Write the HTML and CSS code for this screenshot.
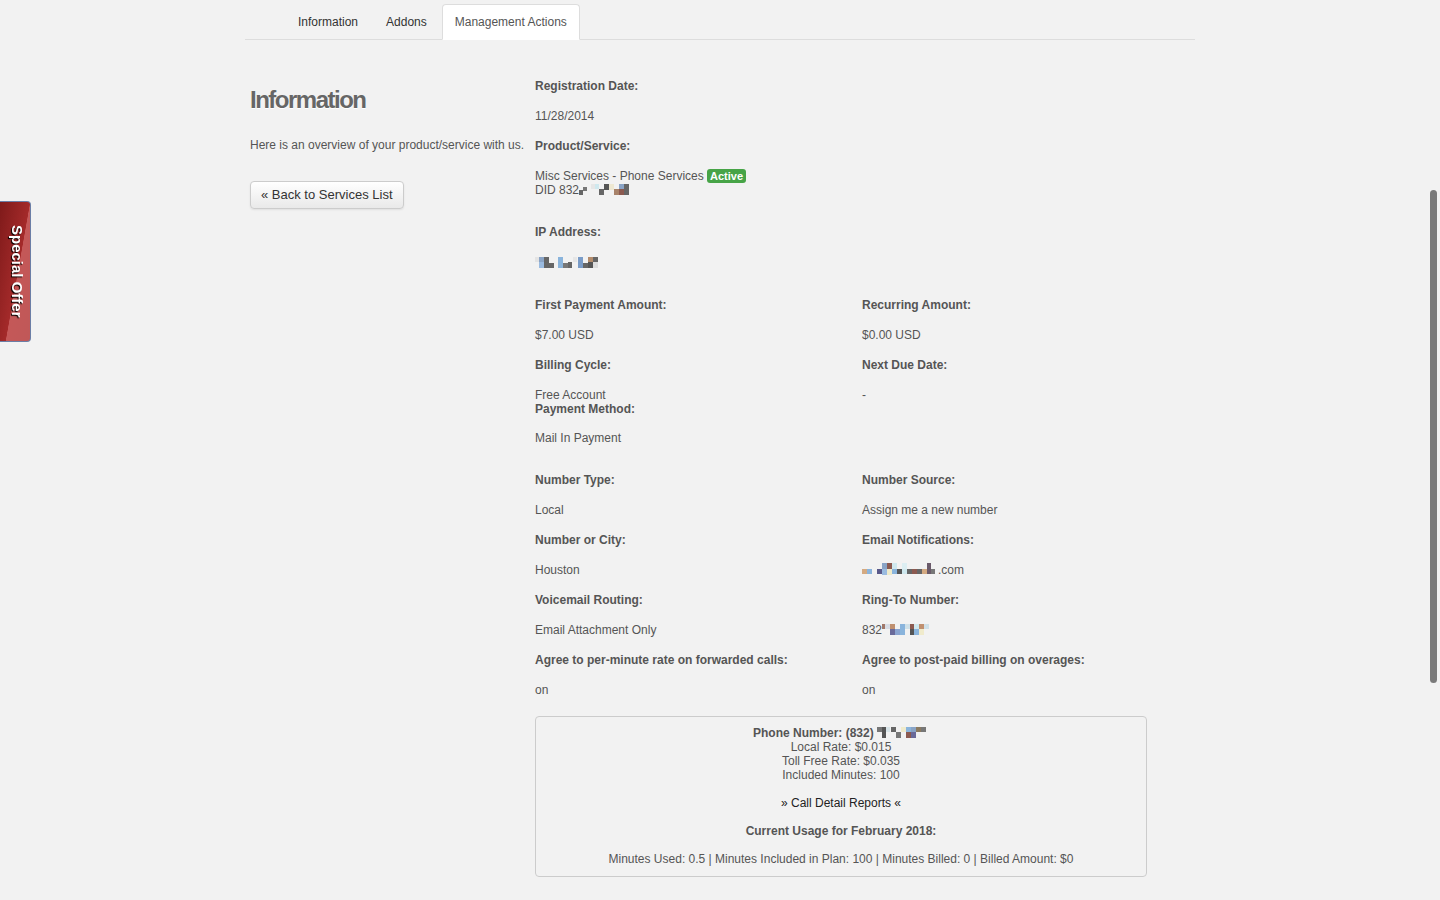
FILE: index.html
```html
<!DOCTYPE html>
<html>
<head>
    <meta charset="UTF-8">
    <title>Product Details</title>
    <link rel="stylesheet" href="styles.css">
</head>
<body>

    <!--左侧特价标签-->
    <div id="special_offer">Special Offer</div>

    <div id="page">
        <!--选项卡-->
        <ul class="tabs">
            <li>Information</li>
            <li>Addons</li>
            <li class="active">Management Actions</li>
        </ul>

        <div class="content">
            <div class="side">
                <h2 class="title">Information</h2>
                <p class="intro">Here is an overview of your product/service with us.</p>
                <span class="btn">&laquo; Back to Services List</span>
            </div>

            <div class="details">
                <p class="label">Registration Date:</p>
                <p class="value">11/28/2014</p>
                <p class="label">Product/Service:</p>
                <p class="value">Misc Services - Phone Services <span class="badge">Active</span><br>DID 832<svg class="blob" width="56" height="11" viewBox="0 0 56 11"><rect x="0" y="6" width="4" height="5" fill="#666"/><rect x="4" y="3" width="4" height="4" fill="#777"/><rect x="12" y="0" width="4" height="5" fill="#e6e6e6"/><rect x="16" y="0" width="4" height="5" fill="#cfe8ee"/><rect x="20" y="5" width="5" height="6" fill="#666"/><rect x="25" y="0" width="5" height="6" fill="#555"/><rect x="30" y="0" width="5" height="6" fill="#eee8d2"/><rect x="35" y="5" width="5" height="6" fill="#a8836a"/><rect x="40" y="0" width="5" height="5" fill="#8aa4c6"/><rect x="40" y="5" width="5" height="6" fill="#8c5a50"/><rect x="45" y="0" width="5" height="11" fill="#666"/></svg></p>

                <p class="label sect">IP Address:</p>
                <p class="value ip"><svg class="blob" width="68" height="11" viewBox="0 0 68 11"><rect x="0" y="0" width="4" height="5" fill="#e4e4e4"/><rect x="4" y="0" width="5" height="5" fill="#8aa4c6"/><rect x="4" y="5" width="5" height="6" fill="#9bbbe0"/><rect x="9" y="0" width="5" height="11" fill="#666"/><rect x="14" y="6" width="5" height="5" fill="#666"/><rect x="23" y="0" width="5" height="11" fill="#8ab4dc"/><rect x="28" y="6" width="5" height="5" fill="#777"/><rect x="33" y="5" width="4" height="6" fill="#666"/><rect x="38" y="0" width="4" height="5" fill="#e6e6e6"/><rect x="43" y="0" width="5" height="11" fill="#7a9cc8"/><rect x="48" y="6" width="5" height="5" fill="#666"/><rect x="53" y="0" width="5" height="5" fill="#b48c6c"/><rect x="53" y="5" width="5" height="6" fill="#555"/><rect x="58" y="0" width="5" height="5" fill="#666"/><rect x="58" y="5" width="5" height="6" fill="#ddd"/></svg></p>

                <div class="grid sect">
                    <div>
                        <p class="label">First Payment Amount:</p>
                        <p class="value">$7.00 USD</p>
                    </div>
                    <div>
                        <p class="label">Recurring Amount:</p>
                        <p class="value">$0.00 USD</p>
                    </div>
                    <div>
                        <p class="label">Billing Cycle:</p>
                        <p class="value tight">Free Account</p>
                        <p class="label short">Payment Method:</p>
                        <p class="value">Mail In Payment</p>
                    </div>
                    <div>
                        <p class="label">Next Due Date:</p>
                        <p class="value">-</p>
                    </div>
                </div>

                <div class="grid sect">
                    <div>
                        <p class="label">Number Type:</p>
                        <p class="value">Local</p>
                    </div>
                    <div>
                        <p class="label">Number Source:</p>
                        <p class="value">Assign me a new number</p>
                    </div>
                    <div>
                        <p class="label">Number or City:</p>
                        <p class="value">Houston</p>
                    </div>
                    <div>
                        <p class="label">Email Notifications:</p>
                        <p class="value"><svg class="blob" width="76" height="12" viewBox="0 0 76 12"><rect x="0" y="6" width="5" height="5" fill="#d4aa82"/><rect x="5" y="6" width="5" height="5" fill="#8ab4dc"/><rect x="15" y="6" width="5" height="5" fill="#5a5a8a"/><rect x="20" y="0" width="5" height="6" fill="#8aa4c6"/><rect x="20" y="6" width="5" height="6" fill="#9bbbe0"/><rect x="25" y="0" width="5" height="6" fill="#8c5a50"/><rect x="25" y="6" width="5" height="6" fill="#f0ebcc"/><rect x="30" y="0" width="5" height="6" fill="#cfe8ee"/><rect x="30" y="6" width="5" height="5" fill="#8ab4dc"/><rect x="35" y="6" width="5" height="5" fill="#555"/><rect x="40" y="0" width="5" height="6" fill="#dceef2"/><rect x="40" y="6" width="5" height="5" fill="#cfe8ee"/><rect x="45" y="6" width="5" height="5" fill="#666"/><rect x="50" y="6" width="5" height="5" fill="#8c5a50"/><rect x="55" y="6" width="5" height="5" fill="#666"/><rect x="60" y="6" width="5" height="5" fill="#d4aa82"/><rect x="65" y="0" width="4" height="11" fill="#6a5a6a"/><rect x="69" y="6" width="4" height="5" fill="#777"/></svg>.com</p>
                    </div>
                    <div>
                        <p class="label">Voicemail Routing:</p>
                        <p class="value">Email Attachment Only</p>
                    </div>
                    <div>
                        <p class="label">Ring-To Number:</p>
                        <p class="value">832<svg class="blob" width="50" height="11" viewBox="0 0 50 11"><rect x="0" y="0" width="3" height="5" fill="#a0786a"/><rect x="3" y="0" width="5" height="5" fill="#d8dde6"/><rect x="8" y="5" width="5" height="6" fill="#6a6a9a"/><rect x="8" y="0" width="5" height="5" fill="#c09070"/><rect x="13" y="5" width="5" height="6" fill="#8aa4d0"/><rect x="18" y="0" width="5" height="11" fill="#8ab4dc"/><rect x="23" y="0" width="5" height="5" fill="#cfe0e8"/><rect x="28" y="0" width="4" height="5" fill="#8c5a50"/><rect x="28" y="5" width="4" height="6" fill="#555"/><rect x="32" y="0" width="5" height="5" fill="#cfe8ee"/><rect x="32" y="5" width="5" height="6" fill="#8ab4dc"/><rect x="37" y="0" width="5" height="5" fill="#c09070"/><rect x="37" y="5" width="5" height="6" fill="#f0ebcc"/><rect x="42" y="0" width="5" height="5" fill="#cfe0e8"/></svg></p>
                    </div>
                    <div>
                        <p class="label">Agree to per-minute rate on forwarded calls:</p>
                        <p class="value">on</p>
                    </div>
                    <div>
                        <p class="label">Agree to post-paid billing on overages:</p>
                        <p class="value">on</p>
                    </div>
                </div>

                <!--号码用量信息-->
                <div class="usage_box">
                    <strong>Phone Number: (832) <svg class="blob" width="52" height="11" viewBox="0 0 52 11"><rect x="0" y="0" width="5" height="5" fill="#777"/><rect x="5" y="0" width="4" height="11" fill="#555"/><rect x="9" y="0" width="4" height="5" fill="#d8e4e8"/><rect x="14" y="0" width="5" height="5" fill="#666"/><rect x="19" y="5" width="5" height="6" fill="#777"/><rect x="24" y="0" width="5" height="5" fill="#f0ebcc"/><rect x="29" y="0" width="5" height="5" fill="#8ab4dc"/><rect x="29" y="5" width="5" height="6" fill="#8c5a50"/><rect x="34" y="0" width="5" height="5" fill="#8aa4c6"/><rect x="34" y="5" width="5" height="6" fill="#6a6a9a"/><rect x="39" y="0" width="5" height="5" fill="#8c7a60"/><rect x="44" y="0" width="5" height="5" fill="#777"/></svg></strong><br>
                    Local Rate: $0.015<br>
                    Toll Free Rate: $0.035<br>
                    Included Minutes: 100<br>
                    <br>
                    <span class="link">&raquo; Call Detail Reports &laquo;</span><br>
                    <br>
                    <strong>Current Usage for February 2018:</strong><br>
                    <br>
                    Minutes Used: 0.5 | Minutes Included in Plan: 100 | Minutes Billed: 0 | Billed Amount: $0
                </div>
            </div>
        </div>
    </div>

    <!--浮动滚动条-->
    <div id="scroll_thumb"></div>
</body>
</html>
```

FILE: styles.css
```css
/*全局样式*/
* {padding:0px;margin:0px;box-sizing:border-box;}
html,body {width:100%;height:100%;overflow:hidden;}
body {
    background:#f2f2f2;
    font-family:"Liberation Sans", Arial, sans-serif;
    font-size:12px;
    line-height:14px;
    color:#555;
}

#page {width:950px;margin:0 0 0 245px;}

/*选项卡*/
.tabs {list-style:none;display:flex;align-items:flex-end;height:40px;padding-left:40px;border-bottom:1px solid #ddd;}
.tabs li {height:36px;line-height:34px;padding:0 12px;margin-right:2px;margin-bottom:-1px;color:#333;font-size:12px;border:1px solid transparent;border-radius:4px 4px 0 0;}
.tabs li.active {background:#fff;border-color:#ddd;border-bottom-color:#fff;color:#555;}

/*内容区*/
.content {display:flex;padding:39px 0 0 5px;}
.side {width:285px;}
.title {font-size:24px;line-height:28px;font-weight:bold;letter-spacing:-1.5px;color:#666;text-shadow:0 1px 0 #fff;margin-top:7px;}
.intro {margin-top:24px;}
.btn {
    display:inline-block;margin-top:29px;
    height:28px;line-height:26px;padding:0 10px;
    font-size:13px;color:#333;
    background:linear-gradient(#fff, #e9e9e9);
    border:1px solid #ccc;border-radius:4px;
    box-shadow:0 1px 2px rgba(0,0,0,0.08);
}

.details {width:612px;}
.label {font-weight:bold;margin-bottom:16px;}
.label.short {margin-bottom:15px;}
.value {margin-bottom:16px;}
.value.tight {margin-bottom:0;}
.value.ip {padding-top:1px;}
.sect {margin-top:28px;}
.grid {display:grid;grid-template-columns:327px 285px;}
.grid.sect + .grid.sect {margin-top:12px;}

.badge {display:inline-block;padding:0 3px;line-height:14px;background:#47a447;color:#fff;font-weight:bold;font-size:11px;border-radius:3px;}
.blob {vertical-align:-1px;}

/*用量框*/
.usage_box {
    margin-top:3px;
    border:1px solid #ccc;border-radius:4px;
    padding:9px 10px 10px;
    text-align:center;
}
.usage_box .link {color:#222;}

/*特价标签*/
#special_offer {
    position:fixed;left:0;top:201px;
    width:31px;height:141px;
    writing-mode:vertical-rl;
    text-align:center;line-height:26px;
    font-size:15px;font-weight:bold;color:#fff;
    text-shadow:1px 1px 1px #000;
    background:linear-gradient(100deg, #7f1a1a 0%, #a42a2a 55%, #c45858 56%, #c05858 100%);
    border:1px solid #6b7ea6;border-left:none;
    border-radius:0 4px 4px 0;
}

#scroll_thumb {position:fixed;right:3px;top:190px;width:7px;height:493px;background:#7a7a7a;border-radius:4px;}
```
